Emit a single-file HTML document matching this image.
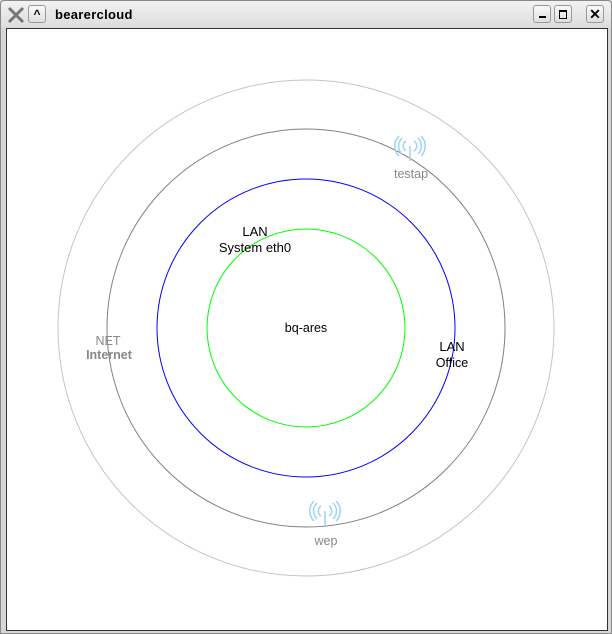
<!DOCTYPE html>
<html><head><style>
body{margin:0;width:612px;height:634px;background:#d9d9d9;font-family:"Liberation Sans",sans-serif;overflow:hidden}
.win{position:absolute;left:0;top:0;width:610px;height:632px;border:1px solid #888;border-radius:4px 4px 0 0;background:linear-gradient(#f2f2f2,#dcdcdc 27px,#d6d6d6 27px)}
.btn{position:absolute;top:4px;width:18px;height:18px;border:1px solid #999;border-radius:3px;background:linear-gradient(#fafafa,#dedede);box-sizing:border-box;font-size:12px;font-weight:bold;text-align:center;line-height:16px}
.title{position:absolute;left:54px;top:6px;font-size:13px;font-weight:bold;letter-spacing:0.3px}
.content{position:absolute;left:5px;top:27px;width:600px;height:601px;background:#fff;border:1px solid #333}
</style></head><body>
<div class="win">
<svg style="position:absolute;left:5px;top:4px" width="20" height="20"><path d="M3 3 L17 17 M17 3 L3 17" stroke="#777" stroke-width="3"/></svg>
<div class="btn" style="left:27px">^</div>
<div class="title">bearercloud</div>
<div class="btn" style="left:532px"><div style="position:absolute;left:5px;top:10px;width:7px;height:2px;background:#000"></div></div>
<div class="btn" style="left:553px"><div style="position:absolute;left:4px;top:4px;width:6px;height:6px;border:1px solid #000;border-top-width:2px"></div></div>
<div class="btn" style="left:585px;font-size:14px">✕</div>
<div class="content"></div>
</div>
<svg style="position:absolute;left:0;top:0" width="612" height="634" font-family="Liberation Sans, sans-serif" font-size="12.5" text-anchor="middle">
<circle cx="306" cy="328" r="248" fill="none" stroke="#c4c4c4"/>
<circle cx="306" cy="328" r="199" fill="none" stroke="#808080"/>
<circle cx="306" cy="328" r="149" fill="none" stroke="#0000ff"/>
<circle cx="306" cy="328" r="99" fill="none" stroke="#00ff00"/>
<text x="306" y="332">bq-ares</text>
<text x="255" y="236" font-size="13">LAN</text>
<text x="255" y="252" font-size="13">System eth0</text>
<text x="452" y="351" font-size="13">LAN</text>
<text x="452" y="367">Office</text>
<text x="108" y="345" fill="#888">NET</text>
<text x="109" y="359" fill="#888" font-weight="bold">Internet</text>
<text x="411" y="178" fill="#888">testap</text>
<text x="326" y="545" fill="#888">wep</text>
<g stroke="#9cd4f6" fill="none" stroke-width="1.5">
<g transform="translate(410,146)"><line x1="0" y1="0" x2="0" y2="15"/><path d="M-4 -5 A6 6 0 0 0 -4 5 M4 -5 A6 6 0 0 1 4 5 M-8 -8 A11 11 0 0 0 -8 8 M8 -8 A11 11 0 0 1 8 8 M-11 -10 A14 14 0 0 0 -11 10 M11 -10 A14 14 0 0 1 11 10"/></g>
<g transform="translate(325,511)"><line x1="0" y1="0" x2="0" y2="15"/><path d="M-4 -5 A6 6 0 0 0 -4 5 M4 -5 A6 6 0 0 1 4 5 M-8 -8 A11 11 0 0 0 -8 8 M8 -8 A11 11 0 0 1 8 8 M-11 -10 A14 14 0 0 0 -11 10 M11 -10 A14 14 0 0 1 11 10"/></g>
</g>
</svg>
</body></html>
